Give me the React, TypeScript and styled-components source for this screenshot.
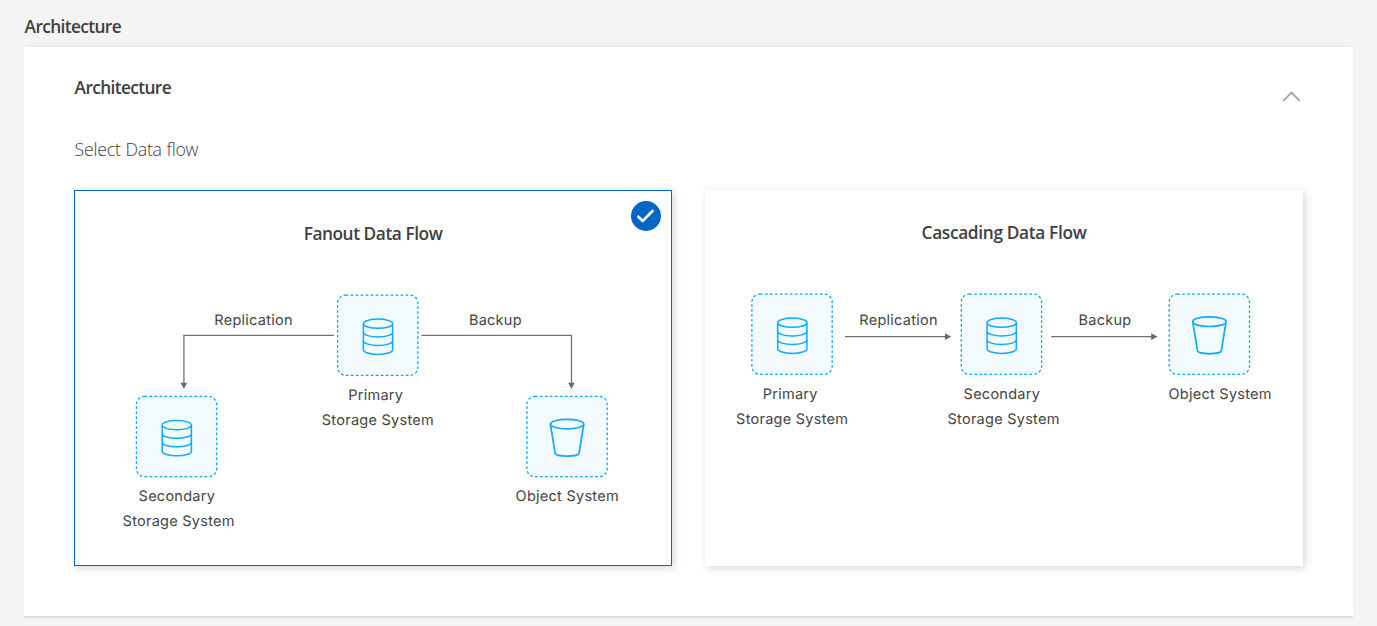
import React from 'react';
import styled, { createGlobalStyle } from 'styled-components';

const GlobalStyle = createGlobalStyle`
  * { box-sizing: border-box; }
  body {
    margin: 0;
    background: #f4f4f4;
    color: #404040;
    font-family: 'Open Sans', 'Noto Sans', sans-serif;
  }
`;

const Page = styled.main`
  height: 626px;
  padding: 6px 24px 0;
  overflow: hidden;
`;

const PageTitle = styled.h1`
  margin: 0;
  height: 41px;
  padding-left: 0.6px;
  line-height: 41px;
  font-size: 17.3px;
  font-weight: 570;
  letter-spacing: -0.62px;
`;

const Panel = styled.section`
  height: 569px;
  padding: 21px 50px 0;
  background: #fff;
  box-shadow: 0 2px 0 #dfdfdf, 0 -3px 5px -3px rgba(0, 0, 0, 0.09);
`;

const PanelHeader = styled.header`
  display: flex;
  justify-content: space-between;
  height: 64px;
`;

const PanelTitle = styled.h2`
  margin: 0;
  padding-left: 0.6px;
  line-height: 40px;
  font-size: 17.3px;
  font-weight: 570;
  letter-spacing: -0.62px;
`;

const CollapseButton = styled.button`
  display: flex;
  width: 24px;
  height: 24px;
  margin: 17px 0 0;
  padding: 0;
  border: 0;
  background: none;
`;

const Prompt = styled.p`
  margin: 0;
  height: 58px;
  padding-left: 0.5px;
  line-height: 34px;
  font-size: 17.8px;
  font-weight: 350;
  letter-spacing: -0.26px;
  word-spacing: 0.5px;
  color: #404040;
`;

const Options = styled.div`
  display: grid;
  grid-template-columns: 598px 598px;
  justify-content: space-between;
`;

const FlowCard = styled.article<{ $selected?: boolean }>`
  position: relative;
  height: 376px;
  padding-top: 26px;
  background: #fff;
  border: ${(p) => (p.$selected ? '1px solid #0067c5' : '0')};
  box-shadow: 2px 2px 8px rgba(0, 0, 0, 0.16);
`;

const FlowTitle = styled.h3<{ $spacing: number }>`
  margin: 0;
  height: 34px;
  line-height: 34px;
  text-align: center;
  font-size: 17.3px;
  font-weight: 570;
  letter-spacing: ${(p) => p.$spacing}px;
`;

const SelectedBadge = styled.span`
  position: absolute;
  top: 10px;
  right: 10px;
  display: flex;
  width: 30px;
  height: 30px;
  border-radius: 50%;
  background: #0067c5;
`;

const Diagram = styled.svg`
  display: block;
  width: 100%;
  height: 300px;
`;

const Label = styled.text`
  font-family: Inter, sans-serif;
  font-size: 14.5px;
  letter-spacing: 0.26px;
  text-rendering: geometricPrecision;
  fill: #444;
`;

const NodeBox = ({ x, y }: { x: number; y: number }) => (
  <rect x={x} y={y} width="80.3" height="80.3" rx="8" fill="#f3fbff" stroke="#00a7f7" strokeWidth="1.25" strokeDasharray="2.7 2.3" />
);

const DatabaseNode = ({ x, y }: { x: number; y: number }) => (
  <g>
    <NodeBox x={x} y={y} />
    <g transform={`translate(${x + 25.8} ${y + 24})`} fill="none" stroke="#0aacff" strokeWidth="1.5">
      <ellipse cx="14.6" cy="4.7" rx="14.6" ry="4.6" />
      <path d="M0 4.7v26.1c0 2.5 6.5 4.6 14.6 4.6s14.6-2.1 14.6-4.6V4.7" />
      <path d="M0 13.5c0 2.4 6.5 4.4 14.6 4.4s14.6-2 14.6-4.4M0 22c0 2.4 6.5 4.4 14.6 4.4s14.6-2 14.6-4.4" />
    </g>
  </g>
);

const BucketNode = ({ x, y }: { x: number; y: number }) => (
  <g>
    <NodeBox x={x} y={y} />
    <g transform={`translate(${x + 23.3} ${y + 22.7})`} fill="none" stroke="#0aacff" strokeWidth="1.7">
      <ellipse cx="16.9" cy="5" rx="16.7" ry="4.8" />
      <path d="M.2 5 5 34.2c.3 1.6 5.5 2.9 11.9 2.9s11.6-1.3 11.9-2.9L33.6 5" />
    </g>
  </g>
);

const Arrow = ({ line, head }: { line: string; head: string }) => (
  <g>
    <path d={line} fill="none" stroke="#707070" strokeWidth="1.25" />
    <path d={head} fill="#6a6a6a" />
  </g>
);

export default function App() {
  return (
    <>
      <GlobalStyle />
      <Page>
        <PageTitle>Architecture</PageTitle>
        <Panel>
          <PanelHeader>
            <PanelTitle>Architecture</PanelTitle>
            <CollapseButton aria-label="Collapse">
              <svg width="24" height="24" fill="none" stroke="#a3a3a3" strokeWidth="1.8">
                <path d="M4.2 15.8 12.5 7.5l8.3 8.3" />
              </svg>
            </CollapseButton>
          </PanelHeader>
          <Prompt>Select Data flow</Prompt>
          <Options>
            <FlowCard $selected>
              <FlowTitle $spacing={-0.44}>Fanout Data Flow</FlowTitle>
              <Diagram viewBox="75 251 596 300">
                <DatabaseNode x={337.6} y={295} />
                <DatabaseNode x={136.4} y={396.4} />
                <BucketNode x={526.9} y={396.4} />
                <Arrow line="M333.8 335.3H183.9V384" head="M180.6 382.8h6.5l-3.25 6.2z" />
                <Arrow line="M421.5 335.3H571.5V384" head="M568.2 382.8h6.5l-3.25 6.2z" />
                <Label x="214.3" y="325.4">Replication</Label>
                <Label x="468.9" y="325.4">Backup</Label>
                <Label x="348.2" y="400.4">Primary</Label>
                <Label x="321.8" y="425.4">Storage System</Label>
                <Label x="138.6" y="501.4">Secondary</Label>
                <Label x="122.6" y="526.4">Storage System</Label>
                <Label x="515.6" y="501.4">Object System</Label>
              </Diagram>
              <SelectedBadge>
                <svg width="30" height="30" fill="none" stroke="#fff" strokeWidth="2.7" strokeLinecap="round" strokeLinejoin="round">
                  <path d="m7.3 15.7 4.5 4.2L21.5 10" />
                </svg>
              </SelectedBadge>
            </FlowCard>
            <FlowCard>
              <FlowTitle $spacing={-0.34}>Cascading Data Flow</FlowTitle>
              <Diagram viewBox="705 250 598 300">
                <DatabaseNode x={751.9} y={294} />
                <DatabaseNode x={961.3} y={294} />
                <BucketNode x={1169.2} y={294} />
                <Arrow line="M845 336.7H946" head="M945 333.3v6.8l6.3-3.4z" />
                <Arrow line="M1051.2 336.7H1152" head="M1151.2 333.3v6.8l6.3-3.4z" />
                <Label x="859.3" y="325.4">Replication</Label>
                <Label x="1078.5" y="325.4">Backup</Label>
                <Label x="762.7" y="399.4">Primary</Label>
                <Label x="736.1" y="424.4">Storage System</Label>
                <Label x="963.6" y="399.4">Secondary</Label>
                <Label x="947.5" y="424.4">Storage System</Label>
                <Label x="1168.5" y="399.4">Object System</Label>
              </Diagram>
            </FlowCard>
          </Options>
        </Panel>
      </Page>
    </>
  );
}
